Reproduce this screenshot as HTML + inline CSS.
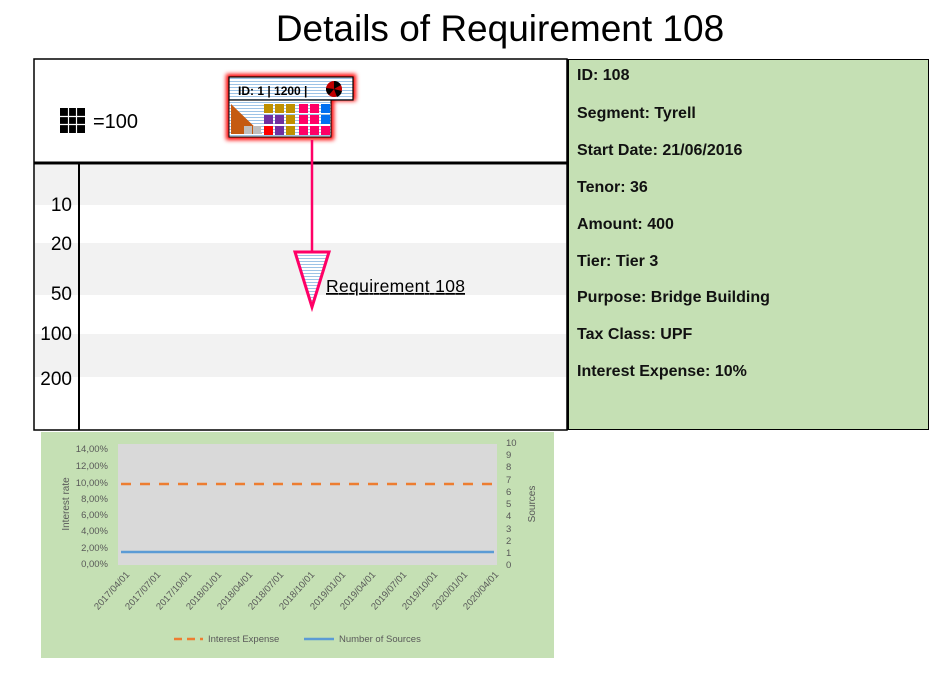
<!DOCTYPE html>
<html><head><meta charset="utf-8"><style>
body{margin:0;width:950px;height:675px;background:#fff;overflow:hidden;font-family:"Liberation Sans",sans-serif}
.t{position:absolute;left:0;top:8px;width:1000px;text-align:center;font-size:37px;color:#000}
.g{position:absolute;left:567px;top:59px;width:362px;height:371px;background:#c5e0b4;border:1px solid #000;border-left:2px solid #000;box-sizing:border-box}
.g div{position:absolute;left:8px;font-weight:bold;font-size:16px;color:#111}
</style></head><body>
<div class="t">Details of Requirement 108</div>
<svg style="position:absolute;left:0;top:0" width="950" height="675">
<rect x="34" y="59" width="533" height="371" fill="#fff" stroke="#000" stroke-width="1.5"/>
<rect x="35" y="165" width="531" height="40" fill="#f2f2f2"/>
<rect x="35" y="243" width="531" height="52" fill="#f2f2f2"/>
<rect x="35" y="334" width="531" height="43" fill="#f2f2f2"/>
<line x1="34" y1="163" x2="567" y2="163" stroke="#000" stroke-width="3"/>
<line x1="79" y1="164" x2="79" y2="430" stroke="#000" stroke-width="2"/>
<g font-size="19" text-anchor="end" fill="#000"><text x="72" y="211">10</text><text x="72" y="250">20</text><text x="72" y="300">50</text><text x="72" y="340">100</text><text x="72" y="385">200</text></g>
<g fill="#000"><rect x="60" y="108" width="25" height="25"/></g>
<g stroke="#fff" stroke-width="1.2"><line x1="68.5" y1="108" x2="68.5" y2="133"/><line x1="76.5" y1="108" x2="76.5" y2="133"/><line x1="60" y1="116.5" x2="85" y2="116.5"/><line x1="60" y1="124.5" x2="85" y2="124.5"/></g>
<text x="93" y="128" font-size="20">=100</text>
<defs><filter id="gl" x="-20%" y="-20%" width="140%" height="140%"><feGaussianBlur stdDeviation="2"/></filter>
<pattern id="st" width="4" height="3" patternUnits="userSpaceOnUse"><rect width="4" height="3" fill="#fff"/><rect width="4" height="1" fill="#9dc3e6"/></pattern></defs>
<path d="M226 74h130v27h-22v39h-108z" fill="#f00" filter="url(#gl)"/>
<path d="M229 77h124v23h-22v37h-102z" fill="url(#st)"/>
<rect x="229" y="77" width="124" height="23" fill="url(#st)" stroke="#000" stroke-width="1.2"/>
<text x="238" y="95" font-size="12" font-weight="bold">ID: 1 | 1200 |</text>
<circle cx="334" cy="89" r="8" fill="#c00000"/><path d="M334 89 L334 81 A8 8 0 0 1 341 85z M334 89 L342 91 A8 8 0 0 1 337 97z M334 89 L329 95 A8 8 0 0 1 326 88z" fill="#000"/>
<path d="M231 104 L262 134 H231z" fill="#c55a11"/>
<rect x="244" y="126" width="8" height="8" fill="#bfbfbf"/><rect x="253" y="126" width="8" height="8" fill="#bfbfbf"/>
<g>
<rect x="264" y="104" width="9" height="9" fill="#bf9000"/><rect x="275" y="104" width="9" height="9" fill="#bf9000"/><rect x="286" y="104" width="9" height="9" fill="#bf9000"/>
<rect x="264" y="115" width="9" height="9" fill="#7030a0"/><rect x="275" y="115" width="9" height="9" fill="#7030a0"/><rect x="286" y="115" width="9" height="9" fill="#bf9000"/>
<rect x="264" y="126" width="9" height="9" fill="#f00"/><rect x="275" y="126" width="9" height="9" fill="#7030a0"/><rect x="286" y="126" width="9" height="9" fill="#bf9000"/>
<rect x="299" y="104" width="9" height="9" fill="#ff0066"/><rect x="310" y="104" width="9" height="9" fill="#ff0066"/><rect x="321" y="104" width="9" height="9" fill="#0070f0"/>
<rect x="299" y="115" width="9" height="9" fill="#ff0066"/><rect x="310" y="115" width="9" height="9" fill="#ff0066"/><rect x="321" y="115" width="9" height="9" fill="#0070f0"/>
<rect x="299" y="126" width="9" height="9" fill="#ff0066"/><rect x="310" y="126" width="9" height="9" fill="#ff0066"/><rect x="321" y="126" width="9" height="9" fill="#ff0066"/>
</g>
<path d="M229 100h102v37h-102z" fill="none" stroke="#000" stroke-width="1"/>
<line x1="312" y1="140" x2="312" y2="252" stroke="#ff0066" stroke-width="2.5"/>
<path d="M295 252h34l-17 55z" fill="url(#st)" stroke="#ff0066" stroke-width="3"/>
<text x="326" y="292" font-size="17.5" text-decoration="underline" textLength="139">Requirement 108</text>
<rect x="41" y="432" width="513" height="226" fill="#c5e0b4"/>
<rect x="118" y="444" width="379" height="121" fill="#d9d9d9"/>
<g font-size="9.5" fill="#595959" text-anchor="end">
<text x="108" y="452">14,00%</text><text x="108" y="469">12,00%</text><text x="108" y="486">10,00%</text><text x="108" y="502">8,00%</text><text x="108" y="518">6,00%</text><text x="108" y="534">4,00%</text><text x="108" y="551">2,00%</text><text x="108" y="567">0,00%</text></g>
<g font-size="9.5" fill="#595959">
<text x="506" y="446">10</text><text x="506" y="458">9</text><text x="506" y="470">8</text><text x="506" y="483">7</text><text x="506" y="495">6</text><text x="506" y="507">5</text><text x="506" y="519">4</text><text x="506" y="532">3</text><text x="506" y="544">2</text><text x="506" y="556">1</text><text x="506" y="568">0</text></g>
<text transform="translate(69,504) rotate(-90)" font-size="10" fill="#595959" text-anchor="middle">Interest rate</text>
<text transform="translate(535,504) rotate(-90)" font-size="10" fill="#595959" text-anchor="middle">Sources</text>
<line x1="121" y1="484" x2="494" y2="484" stroke="#ed7d31" stroke-width="2.5" stroke-dasharray="10,9"/>
<line x1="121" y1="552" x2="494" y2="552" stroke="#5b9bd5" stroke-width="2.5"/>
<g font-size="9.5" fill="#595959" text-anchor="end">
<text transform="translate(130,575) rotate(-48)">2017/04/01</text>
<text transform="translate(161,575) rotate(-48)">2017/07/01</text>
<text transform="translate(192,575) rotate(-48)">2017/10/01</text>
<text transform="translate(222,575) rotate(-48)">2018/01/01</text>
<text transform="translate(253,575) rotate(-48)">2018/04/01</text>
<text transform="translate(284,575) rotate(-48)">2018/07/01</text>
<text transform="translate(315,575) rotate(-48)">2018/10/01</text>
<text transform="translate(346,575) rotate(-48)">2019/01/01</text>
<text transform="translate(376,575) rotate(-48)">2019/04/01</text>
<text transform="translate(407,575) rotate(-48)">2019/07/01</text>
<text transform="translate(438,575) rotate(-48)">2019/10/01</text>
<text transform="translate(468,575) rotate(-48)">2020/01/01</text>
<text transform="translate(499,575) rotate(-48)">2020/04/01</text>
</g>
<line x1="174" y1="639" x2="203" y2="639" stroke="#ed7d31" stroke-width="2.5" stroke-dasharray="8,5"/>
<text x="208" y="642" font-size="9.5" fill="#595959">Interest Expense</text>
<line x1="304" y1="639" x2="334" y2="639" stroke="#5b9bd5" stroke-width="2.5"/>
<text x="339" y="642" font-size="9.5" fill="#595959">Number of Sources</text>
</svg>
<div class="g">
<div style="top:7px">ID: 108</div>
<div style="top:45px">Segment: Tyrell</div>
<div style="top:82px">Start Date: 21/06/2016</div>
<div style="top:119px">Tenor: 36</div>
<div style="top:156px">Amount: 400</div>
<div style="top:193px">Tier: Tier 3</div>
<div style="top:229px">Purpose: Bridge Building</div>
<div style="top:266px">Tax Class: UPF</div>
<div style="top:303px">Interest Expense: 10%</div>
</div>
</body></html>
